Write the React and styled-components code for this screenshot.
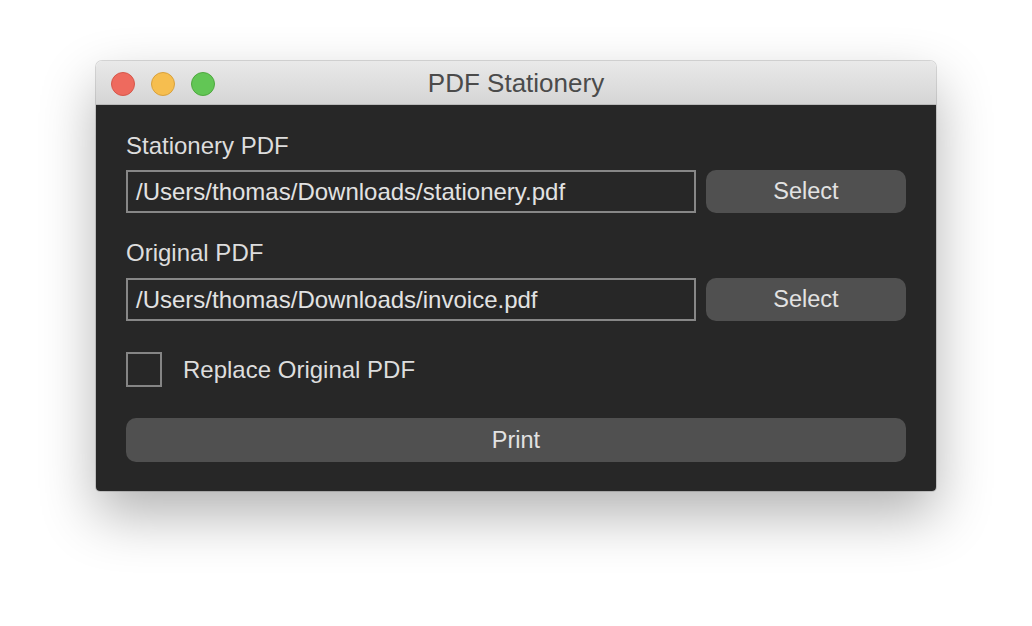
import React from "react";
import styled, { createGlobalStyle } from "styled-components";

const Global = createGlobalStyle`
  html, body { margin: 0; padding: 0; background: #ffffff; }
  body { font-family: "Liberation Sans", Arial, sans-serif; }
  * { box-sizing: border-box; }
`;

const Page = styled.div`
  width: 1032px;
  height: 626px;
  padding: 61px 0 0 96px;
  background: #ffffff;
`;

const Window = styled.div`
  width: 840px;
  border-radius: 6px 6px 4px 4px;
  overflow: hidden;
  box-shadow: 0 24px 55px rgba(0, 0, 0, 0.3), 0 0 0 1px rgba(0, 0, 0, 0.14);
`;

const TitleBar = styled.div`
  position: relative;
  height: 44px;
  padding-top: 2px;
  display: flex;
  align-items: center;
  justify-content: center;
  background: linear-gradient(#e9e9e9, #d5d5d5);
  border-bottom: 1px solid #b9b9b9;
`;

const Lights = styled.div`
  position: absolute;
  left: 15px;
  top: 11px;
  display: flex;
  gap: 16px;
`;

const Light = styled.span`
  width: 24px;
  height: 24px;
  border-radius: 50%;
  background: ${(p) => p.$bg};
  border: 1px solid ${(p) => p.$bd};
`;

const Title = styled.div`
  font-size: 26px;
  color: #4b4b4b;
`;

const Body = styled.div`
  background: #272727;
  padding: 28px 30px 29px;
  display: flex;
  flex-direction: column;
`;

const Label = styled.div`
  font-size: 24px;
  line-height: 26px;
  color: #dddddd;
  margin-top: ${(p) => p.$mt || 0}px;
`;

const FieldRow = styled.div`
  display: flex;
  gap: 10px;
  margin-top: ${(p) => p.$mt || 0}px;
`;

const PathBox = styled.div`
  width: 570px;
  height: 43px;
  border: 2px solid #878787;
  padding: 0 8px;
  display: flex;
  align-items: center;
  font-size: 24px;
  color: #e2e2e2;
  white-space: nowrap;
`;

const Button = styled.div`
  flex: ${(p) => (p.$wide ? 1 : "0 0 200px")};
  height: ${(p) => (p.$wide ? 44 : 43)}px;
  border-radius: 10px;
  background: #505050;
  color: #e2e2e2;
  font-size: 23.5px;
  display: flex;
  align-items: center;
  justify-content: center;
`;

const CheckRow = styled.label`
  display: flex;
  align-items: center;
  gap: 21px;
  margin-top: 31px;
  font-size: 24px;
  color: #dddddd;
`;

const Box = styled.span`
  width: 36px;
  height: 35px;
  border: 2px solid #858585;
`;

const PrintRow = styled.div`
  display: flex;
  margin-top: 31px;
`;

export default function App() {
  return (
    <>
      <Global />
      <Page>
        <Window>
          <TitleBar>
            <Lights>
              <Light $bg="#ee6a5e" $bd="#d5584b" />
              <Light $bg="#f6be4f" $bd="#d8a13d" />
              <Light $bg="#62c655" $bd="#4fa83f" />
            </Lights>
            <Title>PDF Stationery</Title>
          </TitleBar>
          <Body>
            <Label>Stationery PDF</Label>
            <FieldRow $mt={11}>
              <PathBox>/Users/thomas/Downloads/stationery.pdf</PathBox>
              <Button>Select</Button>
            </FieldRow>
            <Label $mt={27}>Original PDF</Label>
            <FieldRow $mt={12}>
              <PathBox>/Users/thomas/Downloads/invoice.pdf</PathBox>
              <Button>Select</Button>
            </FieldRow>
            <CheckRow>
              <Box />
              Replace Original PDF
            </CheckRow>
            <PrintRow>
              <Button $wide>Print</Button>
            </PrintRow>
          </Body>
        </Window>
      </Page>
    </>
  );
}
